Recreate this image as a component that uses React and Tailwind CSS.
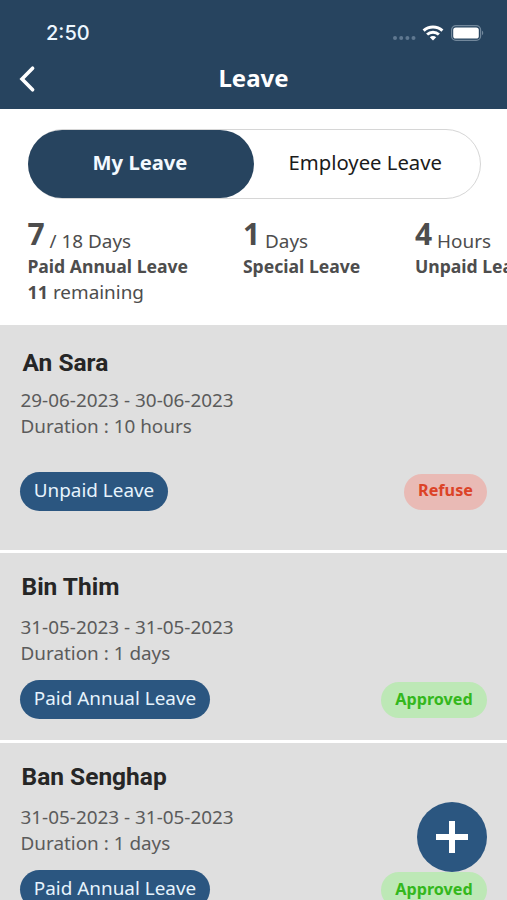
const noto = "font-['Noto_Sans','Open_Sans',sans-serif]";

const stats = [
  { value: "7", unit: "/ 18 Days", label: "Paid Annual Leave", remaining: "11", width: "w-[215.5px]" },
  { value: "1", unit: "Days", label: "Special Leave", width: "w-[172px]" },
  { value: "4", unit: "Hours", label: "Unpaid Leave", width: "w-[170px]" },
];

const requests = [
  {
    name: "An Sara",
    dates: "29-06-2023 - 30-06-2023",
    duration: "10 hours",
    type: "Unpaid Leave",
    status: "Refuse",
    card: "h-[225px] pt-[23px]",
    nameBox: "ml-[2.5px] mb-[9px]",
    footer: "mt-[33px]",
    pill: "w-[148px] pb-[3px]",
    badge: "w-[83px] pb-[3px] bg-[#e9bab5] text-[#dc4327]",
  },
  {
    name: "Bin Thim",
    dates: "31-05-2023 - 31-05-2023",
    duration: "1 days",
    type: "Paid Annual Leave",
    status: "Approved",
    card: "h-[187px] pt-[19px]",
    nameBox: "ml-[1.5px] mb-[12px]",
    footer: "mt-[14px]",
    pill: "w-[190px] pb-[2px]",
    badge: "w-[106px] pb-[2px] bg-[#bde8b6] text-[#34b81c]",
  },
  {
    name: "Ban Senghap",
    dates: "31-05-2023 - 31-05-2023",
    duration: "1 days",
    type: "Paid Annual Leave",
    status: "Approved",
    card: "h-[187px] pt-[19px]",
    nameBox: "ml-[1.5px] mb-[12px]",
    footer: "mt-[14px]",
    pill: "w-[190px] pb-[2px]",
    badge: "w-[106px] pb-[2px] bg-[#bde8b6] text-[#34b81c]",
  },
];

function StatusIcons() {
  return (
    <svg width="94" height="20" viewBox="0 0 94 20" className="shrink-0">
      <g fill="#5f7890">
        <circle cx="5" cy="14" r="2" />
        <circle cx="11.2" cy="14" r="2" />
        <circle cx="17.4" cy="14" r="2" />
        <circle cx="23.5" cy="14" r="2" />
      </g>
      <g fill="none" stroke="#fff" strokeWidth="3">
        <path d="M33.6 6.7a13.8 13.8 0 0 1 18.8 0" />
        <path d="M37.1 10.5a8.8 8.8 0 0 1 11.8 0" />
      </g>
      <path d="M43 16.4l-3.2-3.2a4.6 4.6 0 0 1 6.4 0z" fill="#fff" />
      <rect x="61.6" y="1.6" width="29" height="14.8" rx="4.4" fill="none" stroke="#72889c" strokeWidth="1.2" />
      <rect x="63.2" y="3.4" width="25.6" height="11.2" rx="2.6" fill="#fff" />
      <path d="M92 6.8c1.6.5 1.6 3.9 0 4.4z" fill="#72889c" />
    </svg>
  );
}

function Header() {
  return (
    <header className="h-[108.6px] bg-[#27445f] text-white">
      <div className="flex h-[48px] items-start justify-between pl-[46px] pr-[23px]">
        <span className="mt-[20px] font-['Inter',sans-serif] text-[20px] font-medium leading-[26px] text-[#edf7ff]">2:50</span>
        <div className="mt-[24px]">
          <StatusIcons />
        </div>
      </div>
      <div className="grid h-[60px] grid-cols-[50px_1fr_50px] items-center">
        <svg width="50" height="30" viewBox="0 0 50 30" fill="none" stroke="#fff" strokeWidth="3.6" strokeLinecap="round">
          <path d="M32.6 5.2L22 16l10.6 10.8" />
        </svg>
        <h1 className="text-center text-[24px] font-bold leading-[32px]">Leave</h1>
      </div>
    </header>
  );
}

function Tabs() {
  return (
    <div className="ml-[28px] mt-[20.4px] flex h-[70px] w-[452.5px] rounded-full border border-[#d6d6d6]">
      <div className="-ml-px flex h-[68px] w-[226px] items-center justify-center rounded-full bg-[#27445f] pb-[3px] pr-[2px] text-[20.2px] font-bold text-[#f3f9ff]">
        My Leave
      </div>
      <div className="flex flex-1 items-center justify-center pb-[4px] pr-[3px] text-[20.3px] text-[#1b1b1b]">Employee Leave</div>
    </div>
  );
}

function Stats() {
  return (
    <div className="flex h-[126px] overflow-hidden pl-[27.4px] pt-[16px] text-[#4d4d4d]">
      {stats.map((s) => (
        <div key={s.label} className={`shrink-0 whitespace-nowrap ${s.width}`}>
          <div className="flex h-[39px] items-start">
            <span className="text-[30px] font-bold leading-[37px]">{s.value}</span>
            <span className="ml-[5px] mt-[13px] text-[18.9px] leading-[26px]">{s.unit}</span>
          </div>
          <div className="text-[17.6px] font-bold leading-[25px]">{s.label}</div>
          {s.remaining && (
            <div className="text-[18.9px] leading-[26px]">
              <b className="text-[18px]">{s.remaining}</b> remaining
            </div>
          )}
        </div>
      ))}
    </div>
  );
}

function RequestCard({ r }) {
  return (
    <article className={`bg-[#dfdfdf] px-[20px] ${r.card}`}>
      <h2 className={`font-['Roboto',sans-serif] text-[24.5px] font-bold leading-[30px] text-[#262626] ${r.nameBox}`}>{r.name}</h2>
      <p className="ml-[0.5px] text-[18.9px] leading-[26px] text-[#5b5b5b]">{r.dates}</p>
      <p className="ml-[0.5px] text-[18.9px] leading-[26px] text-[#5b5b5b]">Duration : {r.duration}</p>
      <div className={`flex items-center justify-between ${r.footer}`}>
        <span className={`flex h-[39px] items-center justify-center whitespace-nowrap rounded-full bg-[#2b5680] text-[18.9px] text-[#e6f3fd] ${r.pill}`}>
          {r.type}
        </span>
        <span className={`mt-px flex h-[36px] items-center justify-center rounded-full text-[16.2px] font-bold ${r.badge}`}>{r.status}</span>
      </div>
    </article>
  );
}

export default function App() {
  return (
    <div className={`relative h-[900px] w-[507px] overflow-hidden bg-white ${noto}`}>
      <Header />
      <Tabs />
      <Stats />
      <main className="flex flex-col gap-[3px]">
        {requests.map((r) => (
          <RequestCard key={r.name} r={r} />
        ))}
      </main>
      <button aria-label="Add leave" className="absolute left-[416.5px] top-[802.4px] flex h-[70px] w-[70px] items-center justify-center rounded-full bg-[#2b5680]">
        <svg width="32" height="32" viewBox="0 0 32 32" stroke="#fff" strokeWidth="6">
          <path d="M16 0v32M0 16h32" />
        </svg>
      </button>
    </div>
  );
}
